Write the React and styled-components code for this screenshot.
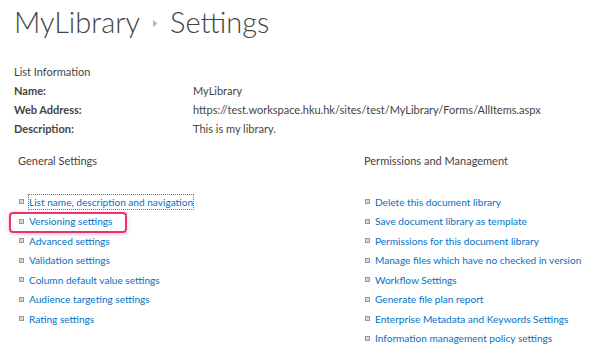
import React from "react";
import styled, { createGlobalStyle } from "styled-components";

const Global = createGlobalStyle`
  html, body { margin: 0; padding: 0; background: #fff; }
  body { font-family: Lato, "Open Sans", sans-serif; color: #444; }
  * { box-sizing: border-box; }
`;

const Page = styled.div`
  width: 600px;
  height: 360px;
  overflow: hidden;
  padding: 0 0 0 14px;
`;

const Title = styled.h1`
  margin: 0;
  height: 56px;
  display: flex;
  align-items: center;
  gap: 13px;
  font-weight: 300;
  font-size: 29px;
  color: #444;
  padding-bottom: 14px;
`;

const Crumb = styled.span`
  display: block;
  width: 4px;
  height: 7px;
  border-left: 4px solid #b8b8b8;
  border-top: 3.5px solid transparent;
  border-bottom: 3.5px solid transparent;
  margin: 4px 0 0;
`;

const Section = styled.div`
  margin-top: 6px;
`;

const SectionHead = styled.div`
  font-size: 11px;
  line-height: 19px;
  color: #444;
`;

const InfoGrid = styled.div`
  display: grid;
  grid-template-columns: 179px auto;
  font-size: 11px;
  line-height: 19px;
`;

const Label = styled.div`
  font-weight: 700;
  color: #444;
`;

const Value = styled.div`
  color: #444;
`;

const Columns = styled.div`
  display: grid;
  grid-template-columns: 346px auto;
  margin-top: 13px;
  padding-left: 4px;
`;

const List = styled.ul`
  list-style: none;
  margin: 22px 0 0;
  padding: 0;
`;

const Item = styled.li`
  position: relative;
  display: flex;
  align-items: center;
  height: 19.5px;
  font-size: 10.1px;
  padding-left: 1px;
`;

const Bullet = styled.span`
  width: 5px;
  height: 5px;
  border: 1px solid #9a9a9a;
  background: #d6d6d6;
  margin-right: 5px;
  flex: none;
`;

const Link = styled.a`
  color: #0072c6;
  text-decoration: none;
  white-space: nowrap;
  line-height: 14px;
  outline: ${(p) => (p.$focus ? "1px dotted #777" : "none")};
  outline-offset: 0px;
`;

const Highlight = styled.span`
  position: absolute;
  left: -9px;
  top: 0;
  width: 118px;
  height: 21px;
  border: 2px solid #e8336e;
  border-radius: 4px;
  box-shadow: 0 1px 4px rgba(232, 51, 110, 0.35);
  pointer-events: none;
`;

const general = [
  "List name, description and navigation",
  "Versioning settings",
  "Advanced settings",
  "Validation settings",
  "Column default value settings",
  "Audience targeting settings",
  "Rating settings",
];

const perms = [
  "Delete this document library",
  "Save document library as template",
  "Permissions for this document library",
  "Manage files which have no checked in version",
  "Workflow Settings",
  "Generate file plan report",
  "Enterprise Metadata and Keywords Settings",
  "Information management policy settings",
];

export default function App() {
  return (
    <>
      <Global />
      <Page>
        <Title>
          <span>MyLibrary</span>
          <Crumb />
          <span>Settings</span>
        </Title>
        <Section>
          <SectionHead>List Information</SectionHead>
          <InfoGrid>
            <Label>Name:</Label>
            <Value>MyLibrary</Value>
            <Label>Web Address:</Label>
            <Value>https://test.workspace.hku.hk/sites/test/MyLibrary/Forms/AllItems.aspx</Value>
            <Label>Description:</Label>
            <Value>This is my library.</Value>
          </InfoGrid>
        </Section>
        <Columns>
          <div>
            <SectionHead>General Settings</SectionHead>
            <List>
              {general.map((t, i) => (
                <Item key={t}>
                  {i === 1 && <Highlight />}
                  <Bullet />
                  <Link href="#" $focus={i === 0}>{t}</Link>
                </Item>
              ))}
            </List>
          </div>
          <div>
            <SectionHead>Permissions and Management</SectionHead>
            <List>
              {perms.map((t) => (
                <Item key={t}>
                  <Bullet />
                  <Link href="#">{t}</Link>
                </Item>
              ))}
            </List>
          </div>
        </Columns>
      </Page>
    </>
  );
}
